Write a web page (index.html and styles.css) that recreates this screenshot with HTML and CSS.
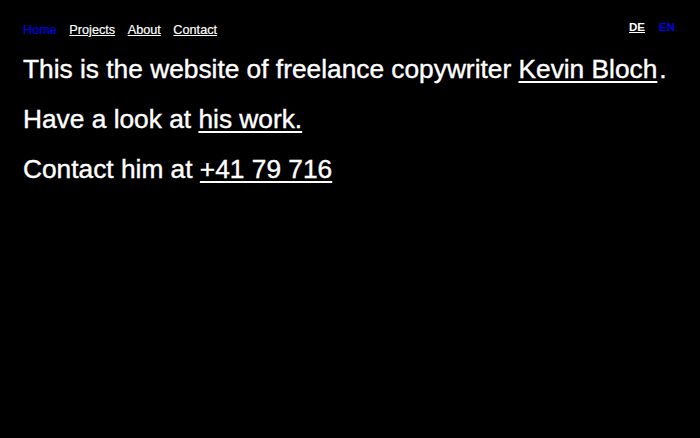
FILE: index.html
```html
<!DOCTYPE html>
<html lang="de">
<head>
    <meta charset="UTF-8">
    <meta name="viewport" content="width=device-width, initial-scale=1.0">
    <link rel="stylesheet" href="styles.css">
    <title>Kevin Bloch – Texter</title>
</head>
<body>
<header class="top">
    <nav class="menu">
        <a class="menu-link active" href="#">Home</a>
        <a class="menu-link" href="#">Projects</a>
        <a class="menu-link" href="#">About</a>
        <a class="menu-link" href="#">Contact</a>
    </nav>
    <div class="lang">
        <a class="lang-link" href="#">DE</a>
        <a class="lang-link active" href="#">EN</a>
    </div>
</header>

<main class="intro">
    <p>This is the website of freelance copywriter <a href="#">Kevin Bloch</a><span class="dot">.</span></p>
    <p>Have a look at <a href="#">his work.</a></p>
    <p>Contact him at <a href="#">+41 79 716</a></p>
</main>
</body>
</html>
```

FILE: styles.css
```css
body, html {
    margin: 0;
    padding: 0;
    height: 100%;
    background-color: #000;
    color: #fff;
    font-family: "Liberation Sans", Arial, sans-serif;
}

a {
    color: #fff;
}

.top {
    display: flex;
    justify-content: space-between;
    align-items: flex-start;
    padding: 21px 25px 0 23px;
}

.menu {
    display: flex;
    gap: 12.5px;
    padding-top: 2px;
}

.menu-link {
    font-size: 12.7px;
    -webkit-text-stroke: 0.2px currentColor;
}

.lang {
    display: flex;
    gap: 14px;
}

.lang-link {
    font-size: 11.5px;
    font-weight: bold;
}

.active {
    color: #0000e6;
    text-decoration: none;
}

.intro {
    padding: 7px 23px 0;
}

.intro p {
    margin: 0;
    font-size: 26.3px;
    line-height: 50px;
    -webkit-text-stroke: 0.4px #fff;
}

.intro a {
    text-underline-offset: 3px;
}

.dot {
    margin-left: 2px;
}
```
